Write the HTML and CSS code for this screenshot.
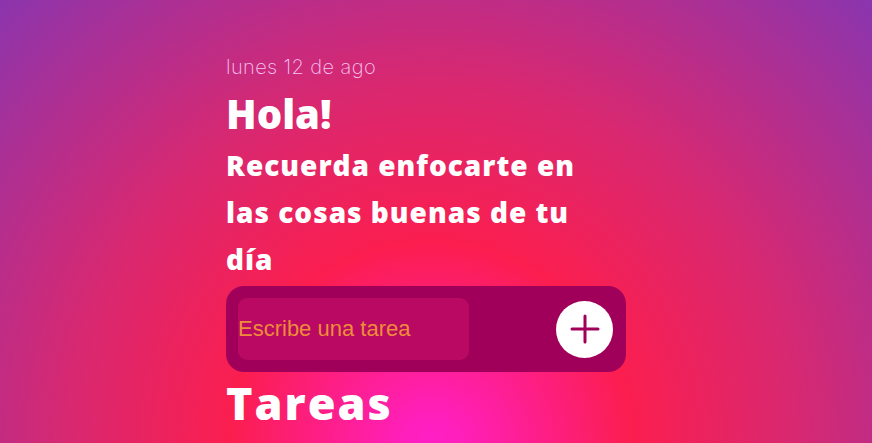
FILE: index.html
```html
<!DOCTYPE html>
<html lang="es">
<head>
<meta charset="utf-8">
<title>Tareas</title>
<link rel="stylesheet" href="styles.css">
</head>
<body>
<main class="app">
  <p class="date">lunes 12 de ago</p>
  <h1 class="hello">Hola!</h1>
  <h2 class="quote">Recuerda enfocarte en las cosas buenas de tu día</h2>
  <form class="add">
    <input class="add-input" type="text" placeholder="Escribe una tarea">
    <button class="add-btn" type="button" aria-label="Agregar">
      <svg width="30" height="30" viewBox="0 0 30 30"><path d="M15 2v26M2 15h26" stroke="#a0005a" stroke-width="3" stroke-linecap="round" fill="none"/></svg>
    </button>
  </form>
  <h2 class="tasks-title">Tareas</h2>
</main>
</body>
</html>
```
FILE: styles.css
```css
html, body {
  margin: 0;
  height: 100%;
  overflow: hidden;
}
body {
  background: radial-gradient(circle at 49.5% 100%, #ff1fc6 0px, #ff1fbd 25px, #fb1e4f 200px, #d92870 360px, #8b35ae 620px);
  font-family: "Open Sans", sans-serif;
  color: #fff;
}
.app {
  width: 400px;
  margin: 0 auto;
  padding: 52px 20px 0 0;
}
.date {
  margin: 0;
  font-family: Inter, sans-serif;
  font-weight: 200;
  font-size: 20px;
  letter-spacing: 0.4px;
  line-height: 30px;
  color: #f7c4f2;
}
.hello {
  margin: 8px 0 0;
  font-weight: 800;
  font-size: 40px;
  line-height: 48px;
}
.quote {
  margin: 4px 0 0;
  width: 370px;
  font-weight: 800;
  font-size: 28px;
  letter-spacing: 1px;
  line-height: 47px;
}
.add {
  margin-top: 3px;
  display: flex;
  align-items: center;
  justify-content: space-between;
  background: #a0005a;
  border-radius: 18px;
  padding: 12px 13px 12px 12px;
}
.add-input {
  width: 231px;
  height: 62px;
  box-sizing: border-box;
  border: 0;
  border-radius: 9px;
  background: #ba0962;
  padding: 0;
  font-family: "Liberation Sans", Arial, sans-serif;
  font-size: 22px;
  color: #ee8c3a;
  outline: none;
}
.add-input::placeholder {
  color: #ee8c3a;
  opacity: 1;
}
.add-btn {
  width: 57px;
  height: 57px;
  border: 0;
  border-radius: 50%;
  background: #fff;
  display: flex;
  align-items: center;
  justify-content: center;
  padding: 0;
}
.tasks-title {
  margin: 0;
  font-weight: 800;
  font-size: 45px;
  letter-spacing: 2px;
  line-height: 62px;
}
```
